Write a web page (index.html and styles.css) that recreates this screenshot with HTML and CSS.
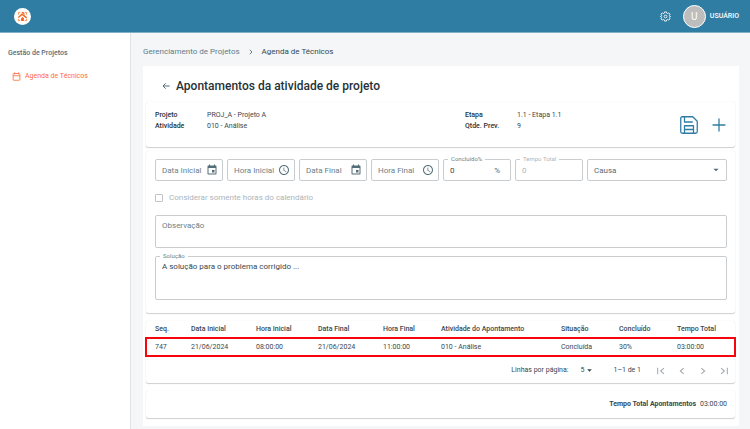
FILE: index.html
```
<!DOCTYPE html>
<html lang="pt-BR">
<head>
    <meta charset="UTF-8">
    <meta name="viewport" content="width=device-width, initial-scale=1.0">
    <title>Agenda de Técnicos</title>
    <link rel="stylesheet" href="styles.css">
</head>
<body>

    <!-- icones usados mais de uma vez -->
    <svg class="sprite" aria-hidden="true">
        <symbol id="icon-event" viewBox="0 0 24 24">
            <path d="M17 12h-5v5h5v-5zM16 1v2H8V1H6v2H5c-1.110 0-1.990.9-1.990 2L3 19c0 1.100.89 2 2 2h14c1.100 0 2-.9 2-2V5c0-1.100-.9-2-2-2h-1V1h-2zm3 18H5V8h14v11z"/>
        </symbol>
        <symbol id="icon-clock" viewBox="0 0 24 24">
            <path d="M12 2C6.500 2 2 6.500 2 12s4.500 10 10 10 10-4.500 10-10S17.500 2 12 2zm0 18c-4.420 0-8-3.580-8-8s3.580-8 8-8 8 3.580 8 8-3.580 8-8 8zm.5-13H11v6l5.250 3.150.75-1.230-4.500-2.670z"/>
        </symbol>
        <symbol id="icon-arrow" viewBox="0 0 24 24">
            <path d="M4 8l8 8 8-8z"/>
        </symbol>
    </svg>

    <header class="topbar">
        <a href="#" class="logo" aria-label="Início">
            <svg viewBox="0 0 24 24">
                <path d="M3 8V3h4M17 3h4v5M3 17v4h4M17 21h4v-4" fill="none" stroke="#ff8a3c" stroke-width="2"/>
                <path d="M3 14l8-7 10 8" fill="none" stroke="#f4631e" stroke-width="3"/>
                <path d="M9 22v-6l3-3 3 3v6z" fill="#f4631e"/>
                <path d="M9 2h5l4 6-3-1z" fill="#f4631e"/>
            </svg>
        </a>
        <div class="topbar-right">
            <button class="icon-btn gear" aria-label="Configurações">
                <svg viewBox="0 0 24 24" fill="none" stroke="currentColor" stroke-width="1.900" stroke-linejoin="round">
                    <path d="M10 2h4l.7 2.800 1.900.8 2.500-1.500 2.800 2.800-1.500 2.500.8 1.900L23 12l-1.800.7-.8 1.900 1.500 2.500-2.800 2.800-2.500-1.500-1.900.8L14 22h-4l-.7-2.800-1.900-.8-2.500 1.500-2.800-2.800 1.500-2.500-.8-1.900L1 12l1.800-.7.8-1.900-1.500-2.500 2.800-2.800 2.500 1.500 1.900-.8z"/>
                    <circle cx="12" cy="12" r="3"/>
                </svg>
            </button>
            <span class="avatar">U</span>
            <span class="user-name">USUÁRIO</span>
        </div>
    </header>

    <div class="layout">
        <nav class="sidebar">
            <h2>Gestão de Projetos</h2>
            <a href="#" class="menu-item">
                <svg viewBox="0 0 24 24" fill="none" stroke="currentColor" stroke-width="2.200">
                    <rect x="3" y="4" width="18" height="18" rx="2"/>
                    <path d="M3 10h18M7 1v5M17 1v5"/>
                </svg>
                Agenda de Técnicos
            </a>
        </nav>

        <main class="content">
            <div class="breadcrumb">
                <a href="#">Gerenciamento de Projetos</a>
                <svg viewBox="0 0 24 24" fill="none" stroke="currentColor" stroke-width="4"><path d="M7 3l9 9-9 9"/></svg>
                <span class="current">Agenda de Técnicos</span>
            </div>

            <div class="paper">
                <div class="title">
                    <button class="icon-btn back" aria-label="Voltar">
                        <svg viewBox="0 0 24 24" fill="none" stroke="currentColor" stroke-width="3"><path d="M23 12H4M11 4l-8 8 8 8"/></svg>
                    </button>
                    <h1>Apontamentos da atividade de projeto</h1>
                </div>

                <section class="card summary">
                    <dl>
                        <dt>Projeto</dt><dd>PROJ_A - Projeto A</dd>
                        <dt>Atividade</dt><dd>010 - Análise</dd>
                    </dl>
                    <dl>
                        <dt>Etapa</dt><dd>1.1 - Etapa 1.1</dd>
                        <dt>Qtde. Prev.</dt><dd>9</dd>
                    </dl>
                    <div class="actions">
                        <button class="icon-btn save" aria-label="Salvar">
                            <svg viewBox="0 0 24 24" fill="none" stroke="currentColor" stroke-width="1.700" stroke-linejoin="round">
                                <path d="M3 1h14l6 6v14a2 2 0 0 1-2 2H3a2 2 0 0 1-2-2V3a2 2 0 0 1 2-2z"/>
                                <path d="M6 1v7h11M6 23v-10h12v10M6 18h12"/>
                            </svg>
                        </button>
                        <button class="icon-btn add" aria-label="Adicionar">
                            <svg viewBox="0 0 24 24" fill="none" stroke="currentColor" stroke-width="2.200"><path d="M12 1v22M1 12h22"/></svg>
                        </button>
                    </div>
                </section>

                <form class="card form">
                    <div class="fields">
                        <div class="field">
                            <input type="text" id="dataInicial">
                            <label for="dataInicial">Data Inicial</label>
                            <svg><use href="#icon-event"/></svg>
                        </div>
                        <div class="field">
                            <input type="text" id="horaInicial">
                            <label for="horaInicial">Hora Inicial</label>
                            <svg><use href="#icon-clock"/></svg>
                        </div>
                        <div class="field">
                            <input type="text" id="dataFinal">
                            <label for="dataFinal">Data Final</label>
                            <svg><use href="#icon-event"/></svg>
                        </div>
                        <div class="field">
                            <input type="text" id="horaFinal">
                            <label for="horaFinal">Hora Final</label>
                            <svg><use href="#icon-clock"/></svg>
                        </div>
                        <div class="field filled">
                            <input type="text" id="concluido" value="0">
                            <label for="concluido">Concluído%</label>
                            <span class="unit">%</span>
                        </div>
                        <div class="field filled disabled">
                            <input type="text" id="tempoTotal" value="0" disabled>
                            <label for="tempoTotal">Tempo Total</label>
                        </div>
                        <div class="field wide">
                            <select id="causa" aria-label="Causa">
                                <option>Causa</option>
                            </select>
                            <svg class="caret"><use href="#icon-arrow"/></svg>
                        </div>
                    </div>

                    <div class="check">
                        <input type="checkbox" id="calendario" disabled>
                        <label for="calendario">Considerar somente horas do calendário</label>
                    </div>

                    <div class="field area">
                        <textarea id="observacao" class="short"></textarea>
                        <label for="observacao">Observação</label>
                    </div>
                    <div class="field area filled">
                        <textarea id="solucao">A solução para o problema corrigido ...</textarea>
                        <label for="solucao">Solução</label>
                    </div>
                </form>

                <section class="card list">
                    <table>
                        <thead>
                            <tr>
                                <th class="col-seq">Seq.</th>
                                <th class="col-date">Data Inicial</th>
                                <th class="col-hour">Hora Inicial</th>
                                <th class="col-date">Data Final</th>
                                <th class="col-end">Hora Final</th>
                                <th class="col-activity">Atividade do Apontamento</th>
                                <th class="col-end">Situação</th>
                                <th class="col-end">Concluído</th>
                                <th class="col-end">Tempo Total</th>
                            </tr>
                        </thead>
                        <tbody>
                            <tr class="highlight">
                                <td>747</td>
                                <td>21/06/2024</td>
                                <td>08:00:00</td>
                                <td>21/06/2024</td>
                                <td>11:00:00</td>
                                <td>010 - Análise</td>
                                <td>Concluída</td>
                                <td>30%</td>
                                <td>03:00:00</td>
                            </tr>
                        </tbody>
                    </table>
                    <div class="pagination">
                        <label for="linhas">Linhas por página:</label>
                        <div class="page-size">
                            <select id="linhas">
                                <option>5</option>
                                <option>10</option>
                            </select>
                            <svg class="caret"><use href="#icon-arrow"/></svg>
                        </div>
                        <span class="range">1–1 de 1</span>
                        <div class="pager">
                            <button class="icon-btn" aria-label="Primeira página" disabled>
                                <svg viewBox="0 0 24 24" fill="none" stroke="currentColor" stroke-width="2.500"><path d="M4 4v16M19 5l-8 7 8 7"/></svg>
                            </button>
                            <button class="icon-btn" aria-label="Página anterior" disabled>
                                <svg viewBox="0 0 24 24" fill="none" stroke="currentColor" stroke-width="2.500"><path d="M16 5l-8 7 8 7"/></svg>
                            </button>
                            <button class="icon-btn" aria-label="Próxima página" disabled>
                                <svg viewBox="0 0 24 24" fill="none" stroke="currentColor" stroke-width="2.500"><path d="M8 5l8 7-8 7"/></svg>
                            </button>
                            <button class="icon-btn" aria-label="Última página" disabled>
                                <svg viewBox="0 0 24 24" fill="none" stroke="currentColor" stroke-width="2.500"><path d="M5 5l8 7-8 7M20 4v16"/></svg>
                            </button>
                        </div>
                    </div>
                </section>

                <section class="card total">
                    <strong>Tempo Total Apontamentos</strong>
                    <span>03:00:00</span>
                </section>
            </div>
        </main>
    </div>

</body>
</html>
```
FILE: styles.css
```
* {
    box-sizing: border-box;
}

body {
    margin: 0;
    min-height: 100vh;
    display: flex;
    flex-direction: column;
    font-family: Roboto, sans-serif;
    font-size: 7px;
    line-height: 11px;
    color: #37474f;
    background-color: #f4f6f8;
}

h1, h2, dl, dd {
    margin: 0;
}

a {
    color: inherit;
    text-decoration: none;
}

svg {
    display: block;
    fill: currentColor;
}

.sprite {
    display: none;
}

input, select, textarea {
    font: inherit;
    color: inherit;
}

.icon-btn {
    padding: 0;
    border: none;
    background: none;
    color: inherit;
    cursor: pointer;
}

.icon-btn svg {
    width: 100%;
    fill: none;
}

/* topo */
.topbar {
    height: 33px;
    padding: 0 11px 0 14px;
    display: flex;
    align-items: center;
    justify-content: space-between;
    background-color: #2f7da3;
    border-bottom: 1px solid #7fb0c8;
    color: white;
}

.logo {
    width: 17px;
    height: 17px;
    padding: 3px;
    border-radius: 50%;
    background: white;
}

.topbar-right {
    display: flex;
    align-items: center;
}

.gear {
    width: 11px;
    margin-right: 12px;
}

.avatar {
    width: 23px;
    height: 23px;
    margin-right: 4px;
    border: 1px solid white;
    border-radius: 50%;
    background: #bdbdbd;
    font-size: 10px;
    line-height: 21px;
    text-align: center;
}

.user-name {
    font-weight: 500;
}

/* menu lateral */
.layout {
    flex: 1;
    display: flex;
}

.sidebar {
    width: 131px;
    flex-shrink: 0;
    padding: 15px 8px;
    background: white;
    border-right: 1px solid #e0e3e6;
}

.sidebar h2 {
    font-size: 7px;
    font-weight: 500;
    color: #546e7a;
}

.menu-item {
    display: flex;
    align-items: center;
    gap: 4px;
    margin: 12px 0 0 4px;
    color: #ff6b3d;
}

.menu-item svg {
    width: 9px;
    fill: none;
}

.content {
    flex: 1;
    min-width: 0;
    padding: 13px 11px 3px 12px;
}

.breadcrumb {
    display: flex;
    align-items: center;
    gap: 8px;
    margin-bottom: 9px;
    font-size: 8px;
    color: #607d8b;
}

.breadcrumb svg {
    width: 6px;
    fill: none;
}

.breadcrumb .current {
    color: #37474f;
}

.paper {
    padding: 11px 4px 8px 3px;
    background: white;
}

.title {
    display: flex;
    align-items: center;
    gap: 6px;
    margin: 0 0 7px 16px;
}

.title h1 {
    font-size: 12px;
    line-height: 18px;
    font-weight: 500;
    color: #263238;
}

.back {
    width: 8px;
    color: #546e7a;
}

.card {
    border-radius: 2px;
    box-shadow: 0 0 1px rgba(0, 0, 0, 0.15), 0 1px 1px rgba(0, 0, 0, 0.18);
}

/* dados da atividade */
.summary {
    display: flex;
    padding: 8px 9px 0;
    margin-bottom: 4px;
}

.summary dl {
    flex: 0 0 310px;
    display: grid;
    grid-template-columns: 52px 1fr;
    align-content: start;
}

.summary dl + dl {
    flex: 1;
}

.summary dt {
    font-weight: 500;
    color: #263238;
}

.actions {
    display: flex;
    align-items: center;
    gap: 14px;
    padding: 6px 0 13px;
    color: #2f7da3;
}

.save {
    width: 18px;
}

.add {
    width: 14px;
}

/* formulario */
.form {
    padding: 8px 8px 13px 9px;
    margin-bottom: 8px;
}

.fields {
    display: grid;
    grid-template-columns: repeat(8, 1fr);
    gap: 4px;
}

.field {
    position: relative;
    font-size: 8px;
    color: #546e7a;
}

.wide {
    grid-column: span 2;
}

.field input, .field select, .field textarea {
    display: block;
    width: 100%;
    height: 22px;
    padding: 0 6px;
    border: 1px solid #c9cdd0;
    border-radius: 2px;
    background: white;
    appearance: none;
}

.field label {
    position: absolute;
    left: 7px;
    top: 6px;
    color: #6b7f89;
}

.filled input, .filled textarea {
    color: #37474f;
}

.filled label {
    left: 5px;
    top: -4px;
    padding: 0 3px;
    background: white;
    font-size: 6px;
    line-height: 8px;
}

.field svg {
    position: absolute;
    right: 5px;
    top: 5px;
    width: 12px;
    height: 12px;
    pointer-events: none;
}

.field .caret {
    right: 7px;
    top: 7px;
    width: 8px;
    height: 8px;
}

.unit {
    position: absolute;
    right: 11px;
    top: 6px;
}

.disabled input, .disabled label {
    color: #b0b5b8;
}

.check {
    display: flex;
    align-items: center;
    gap: 6px;
    margin: 11px 0;
    font-size: 8px;
    line-height: 12px;
    color: #aeb4b8;
}

.check input {
    width: 8px;
    height: 8px;
    margin: 0;
    border: 1px solid #c0c4c7;
    border-radius: 1px;
    appearance: none;
}

.field textarea {
    height: 44px;
    padding: 4px 6px;
    resize: none;
}

.field .short {
    height: 33px;
}

.area {
    margin-top: 8px;
}

.area:not(.filled) label {
    top: 5px;
}

/* tabela */
.list {
    padding-bottom: 4px;
    margin-bottom: 8px;
}

table {
    width: 100%;
    table-layout: fixed;
    border-collapse: collapse;
}

th, td {
    padding: 0;
    text-align: left;
    font-weight: 400;
}

th {
    height: 17px;
    font-weight: 500;
}

td {
    height: 18px;
}

th:first-child, td:first-child {
    padding-left: 9px;
}

.col-seq {
    width: 45px;
}

.col-date {
    width: 65px;
}

.col-hour {
    width: 62px;
}

.col-end {
    width: 58px;
}

.highlight {
    outline: 2px solid #f8040c;
    outline-offset: -1px;
}

.pagination {
    display: flex;
    align-items: center;
    justify-content: flex-end;
    padding: 9px 6px 3px 0;
}

.page-size {
    position: relative;
    margin: 0 20px 0 12px;
}

.page-size select {
    display: block;
    width: 13px;
    padding: 0;
    border: none;
    background: none;
    appearance: none;
}

.page-size .caret {
    position: absolute;
    right: 0;
    top: 2px;
    width: 7px;
    height: 7px;
    pointer-events: none;
}

.pager {
    display: flex;
    gap: 11px;
    margin-left: 15px;
    color: #a3a9ad;
}

.pager .icon-btn {
    width: 10px;
}

.total {
    display: flex;
    justify-content: flex-end;
    gap: 4px;
    padding: 8px;
}

.total strong {
    font-weight: 700;
}
```
